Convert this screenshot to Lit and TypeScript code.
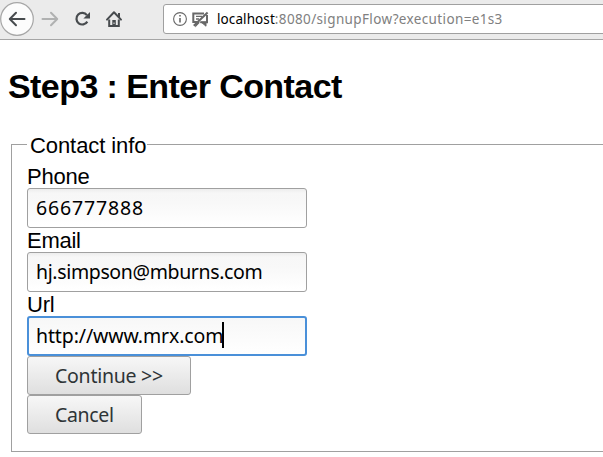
import { LitElement, html, css } from "lit";
import { customElement, property } from "lit/decorators.js";

@customElement("browser-toolbar")
class BrowserToolbar extends LitElement {
  static styles = css`
    :host { display: flex; box-sizing: border-box; height: 40px; background: #ebebeb; border-bottom: 1px solid #a5a5a5; overflow: hidden; }
    .nav { display: block; flex: none; width: 163px; height: 39px; }
    .address { display: flex; align-items: center; flex: 1; box-sizing: border-box; height: 30px; margin: 4px -8px 0 0; padding-left: 9px; background: #fff; border: 1px solid #a0a0a0; border-radius: 3px; }
    .marks { flex: none; width: 38px; height: 20px; margin-right: 6px; }
    .url { font: 13.5px/20px "Noto Sans", sans-serif; color: #808080; white-space: pre; letter-spacing: 0.36px; }
    .host { color: #000; letter-spacing: 0.09px; }
  `;
  render() {
    return html`
      <svg class="nav" viewBox="0 0 163 39" fill="none" stroke="#474b4e" stroke-width="2">
        <circle cx="17" cy="19" r="16.3" fill="#fcfcfc" stroke="#a6a6a6" stroke-width="1.2" />
        <path d="M10 19H24.5M16 12.8L9.8 19L16 25.2" stroke-linejoin="round" stroke-linecap="round" />
        <path d="M42.5 19H57M51 12.8L57.2 19L51 25.2" stroke="#b0b1b1" stroke-linejoin="round" stroke-linecap="round" />
        <path d="M86.9 15.2A5.8 5.8 0 1 0 87.3 21.6" stroke-width="2.2" />
        <path d="M90 12V18.6H83.4Z" fill="#474b4e" stroke="none" />
        <path d="M107 19.6L114 12.3L121 19.6" stroke-width="2" stroke-linecap="round" stroke-linejoin="round" />
        <path d="M109.2 19.5V26H118.8V19.5M119 13V17" stroke-width="2" />
        <path d="M112.3 20H115.8V26H112.3Z" fill="#474b4e" stroke="none" />
        <path d="M114 22.5V24" stroke="#ebebeb" stroke-width="1" />
      </svg>
      <div class="address">
        <svg class="marks" viewBox="0 0 38 20" fill="none" stroke="#686868">
          <circle cx="7" cy="10" r="6.4" stroke-width="1.1" />
          <path d="M7 9V13.5M7 6V7.5" stroke-width="1.6" />
          <path d="M31 4.4H20.3V13H23.2V16L26 13M34 6V13.2H27.5" stroke-width="2" />
          <path d="M27 13.2H33V17.2L29 13.8" fill="#686868" stroke-width="1" />
          <path d="M23 7.4H29M23 10H26" stroke-width="1.3" />
          <path d="M20.8 16.8L34.6 3.4" stroke-width="2.1" />
        </svg>
        <span class="url"><span class="host">localhost</span>:8080/signupFlow?execution=e1s3</span>
      </div>
    `;
  }
}

@customElement("contact-field")
class ContactField extends LitElement {
  @property() label = "";
  @property({ type: Boolean, reflect: true }) active = false;
  static styles = css`
    :host { display: block; height: 64px; }
    .label { height: 24px; font: 22px/25px "Liberation Sans", sans-serif; letter-spacing: -0.25px; }
    .box { display: flex; align-items: center; box-sizing: border-box; width: 280px; height: 40px; padding: 0 8px; border: 1px solid #a0a0a0; border-radius: 3px; background: linear-gradient(#ededed 0, #f7f7f7 4px, #f8f8f8 14px, #fff 36px); font: 19.5px/28px "Noto Sans", sans-serif; white-space: pre; }
    :host([active]) .box { border: 2px solid #4a90d9; padding: 0 7px; background: linear-gradient(#f7f7f7, #fff); }
    .caret { width: 2px; height: 26px; margin: -2px 0 0 -1px; background: #000; }
  `;
  render() {
    return html`
      <div class="label">${this.label}</div>
      <div class="box"><span><slot></slot></span>${this.active ? html`<span class="caret"></span>` : ""}</div>
    `;
  }
}

@customElement("app-root")
class AppRoot extends LitElement {
  static styles = css`
    :host { display: block; width: 603px; height: 457px; overflow: hidden; background: #fff; color: #000; }
    .title { margin: 24px 0 0 8px; height: 45px; font: bold 34px/45px "Liberation Sans", sans-serif; letter-spacing: -0.57px; white-space: pre; }
    .group { margin: 23px -20px 0 11px; padding: 7px 15px 17px; border: 1px solid #a0a0a0; min-width: 0; height: 320px; box-sizing: border-box; }
    .legend { margin: 0; padding: 0 1px 0 3px; height: 25px; font: 22px/28px "Liberation Sans", sans-serif; letter-spacing: -0.08px; }
    .phone { letter-spacing: 0.85px; }
    .email { letter-spacing: -0.36px; }
    .web { letter-spacing: -0.12px; }
    .button { display: block; box-sizing: border-box; height: 39px; padding: 0 0 0 27px; border: 1px solid #a0a0a0; border-radius: 3px; background: linear-gradient(#f7f7f7, #dfdfdf); color: #2e3436; font: 19.5px/28px "Noto Sans", sans-serif; text-align: left; white-space: pre; }
    .continue { width: 164px; letter-spacing: -0.26px; }
    .cancel { width: 115px; letter-spacing: -0.35px; }
  `;
  render() {
    return html`
      <browser-toolbar></browser-toolbar>
      <div class="title">Step3 : Enter Contact</div>
      <fieldset class="group">
        <legend class="legend">Contact info</legend>
        <contact-field label="Phone"><span class="phone">666777888</span></contact-field>
        <contact-field label="Email"><span class="email">hj.simpson@mburns.com</span></contact-field>
        <contact-field label="Url" active><span class="web">http://www.mrx.com</span></contact-field>
        <button class="button continue">Continue &gt;&gt;</button>
        <button class="button cancel">Cancel</button>
      </fieldset>
    `;
  }
}
